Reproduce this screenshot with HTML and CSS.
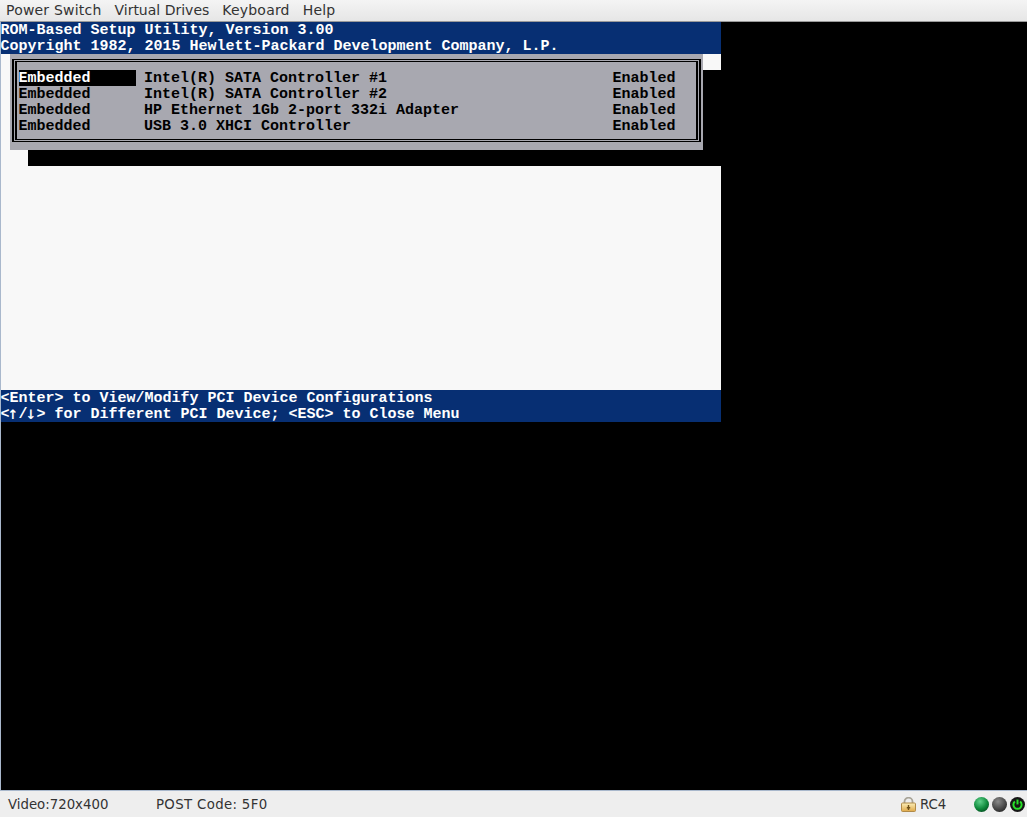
FILE: index.html
```html
<!DOCTYPE html>
<html lang="en">
<head>
<meta charset="utf-8">
<title>iLO Remote Console</title>
<link rel="stylesheet" href="styles.css">
</head>
<body>
<div class="app">
  <nav class="menubar">
    <span class="menu-item">Power Switch</span>
    <span class="menu-item menu-tight">Virtual Drives</span>
    <span class="menu-item">Keyboard</span>
    <span class="menu-item">Help</span>
  </nav>
  <main class="viewport">
    <div class="screen">
      <header class="band">
        <div class="line">ROM-Based Setup Utility, Version 3.00</div>
        <div class="line">Copyright 1982, 2015 Hewlett-Packard Development Company, L.P.</div>
      </header>
      <section class="desk">
        <div class="shadow"></div>
        <div class="popup">
          <div class="frame">
            <div class="frame-inner">
              <div class="row selected"><span class="c-slot">Embedded</span><span class="c-name">Intel(R) SATA Controller #1</span><span class="c-state">Enabled</span></div>
              <div class="row"><span class="c-slot">Embedded</span><span class="c-name">Intel(R) SATA Controller #2</span><span class="c-state">Enabled</span></div>
              <div class="row"><span class="c-slot">Embedded</span><span class="c-name">HP Ethernet 1Gb 2-port 332i Adapter</span><span class="c-state">Enabled</span></div>
              <div class="row"><span class="c-slot">Embedded</span><span class="c-name">USB 3.0 XHCI Controller</span><span class="c-state">Enabled</span></div>
            </div>
          </div>
        </div>
      </section>
      <footer class="band">
        <div class="line">&lt;Enter&gt; to View/Modify PCI Device Configurations</div>
        <div class="line">&lt;<span class="arrow">↑</span>/<span class="arrow">↓</span>&gt; for Different PCI Device; &lt;ESC&gt; to Close Menu</div>
      </footer>
    </div>
  </main>
  <footer class="status">
    <span class="st-video">Video:720x400</span>
    <span class="st-post">POST Code: 5F0</span>
    <span class="st-spacer"></span>
    <svg class="lock" width="15" height="15" viewBox="0 0 15 15" aria-hidden="true">
      <defs>
        <linearGradient id="lockBody" x1="0" y1="0" x2="0" y2="1"><stop offset="0" stop-color="#fbeeb8"/><stop offset="1" stop-color="#dfa848"/></linearGradient>
      </defs>
      <path d="M3.5 6.5V4.5a4 3.8 0 0 1 8 0V6.5" fill="none" stroke="#a8a498" stroke-width="1.8"/>
      <rect x="0.5" y="6" width="14" height="8.5" rx="1" fill="url(#lockBody)" stroke="#b08a48"/>
      <path d="M7.5 8v5M5.8 10.8h3.4" stroke="#6e5018" stroke-width="1.4"/>
    </svg>
    <span class="st-enc">RC4</span>
    <span class="leds">
      <svg width="15" height="15" viewBox="0 0 15 15" aria-hidden="true">
        <defs>
          <radialGradient id="ledGreen" cx=".4" cy=".3" r=".8"><stop offset="0" stop-color="#5fd08a"/><stop offset=".6" stop-color="#0f8a3c"/><stop offset="1" stop-color="#04481e"/></radialGradient>
        </defs>
        <circle cx="7.5" cy="7.5" r="7.5" fill="url(#ledGreen)"/>
      </svg>
      <svg width="15" height="15" viewBox="0 0 15 15" aria-hidden="true">
        <defs>
          <radialGradient id="ledGrey" cx=".4" cy=".3" r=".8"><stop offset="0" stop-color="#8a8a8a"/><stop offset=".6" stop-color="#4a4a4a"/><stop offset="1" stop-color="#222"/></radialGradient>
        </defs>
        <circle cx="7.5" cy="7.5" r="7.5" fill="url(#ledGrey)"/>
      </svg>
      <svg width="15" height="15" viewBox="0 0 15 15" aria-hidden="true">
        <circle cx="7.5" cy="7.5" r="7.5" fill="#161616"/>
        <path d="M4.9 4.6a4.1 4.1 0 1 0 5.2 0" fill="none" stroke="#28e028" stroke-width="2"/>
        <path d="M7.5 2.6v4.8" stroke="#28e028" stroke-width="2"/>
      </svg>
    </span>
  </footer>
</div>
</body>
</html>
```
FILE: styles.css
```css
* { box-sizing: border-box; }
html, body { margin: 0; padding: 0; }
body { width: 1027px; height: 817px; overflow: hidden; background: #eeeeee; }
.app { display: flex; flex-direction: column; height: 817px; }

.menubar {
  height: 21px; display: flex; align-items: center; gap: 13px; padding-left: 6px;
  background: linear-gradient(#f4f4f4, #e6e6e6);
  font: 14px/21px "DejaVu Sans", sans-serif; letter-spacing: .2px; color: #333;
}
.menu-tight { letter-spacing: 0; }
.viewport {
  height: 770px; background: #000; border-top: 1px solid #9a9a9a; border-left: 1px solid #a9b8cc;
  border-bottom: 1px solid #a9b8cc;
}
.screen {
  width: 720px; height: 400px; display: flex; flex-direction: column; background: #f8f8f8;
  font: bold 15px/18px "Liberation Mono", monospace;
}
.band { background: #072f73; color: #fff; }
.line { height: 16px; white-space: pre; text-indent: -.5px; }
.arrow {
  display: inline-block; width: 9px; height: 16px; overflow: visible; vertical-align: top;
  font-family: "DejaVu Sans", sans-serif; font-size: 13px; line-height: 18px; text-indent: -2px;
}
.desk { flex: 1; position: relative; }
.shadow { position: absolute; left: 27px; top: 16px; width: 693px; height: 96px; background: #000; }
.popup { position: absolute; left: 9px; top: 0; width: 693px; height: 96px; background: #a8a8b0; padding: 5px 2px 8px; color: #000; }
.frame { height: 83px; border-style: solid; border-color: #000; border-width: 1px 2px; padding: 1px; }
.frame-inner { height: 79px; border-style: solid; border-color: #000; border-width: 1px 2px; padding: 8px 0 0 2px; }
.row { display: flex; height: 16px; white-space: pre; }
.c-slot { width: 117px; text-indent: -.5px; }
.selected .c-slot { background: #000; color: #fff; }
.c-name { width: 477px; padding-left: 8px; }
.c-state { width: 63px; text-indent: -.5px; }

.status {
  flex: 1; display: flex; align-items: center; padding: 0 2px 0 8px; background: #eeeeee;
  font: 13.3px/25px "DejaVu Sans", sans-serif; color: #333;
}
.st-video { width: 148px; }
.st-post { letter-spacing: .35px; }
.st-spacer { flex: 1; }
.lock { margin-right: 4px; }
.st-enc { width: 54px; }
.leds { display: flex; gap: 3px; }
```
